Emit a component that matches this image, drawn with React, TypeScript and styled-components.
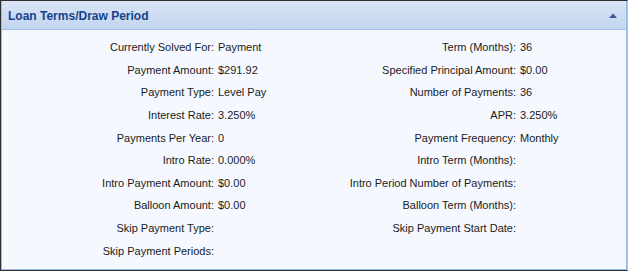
import styled, {createGlobalStyle} from "styled-components";

const GlobalStyle = createGlobalStyle`
    html, body {
        margin: 0;
        padding: 0;
        background: #ffffff;
    }
    body {
        font-family: "Liberation Sans", Arial, sans-serif;
    }
`

type FieldType = {
    label: string
    value?: string
}

const rows: [FieldType, FieldType][] = [
    [{label: "Currently Solved For:", value: "Payment"}, {label: "Term (Months):", value: "36"}],
    [{label: "Payment Amount:", value: "$291.92"}, {label: "Specified Principal Amount:", value: "$0.00"}],
    [{label: "Payment Type:", value: "Level Pay"}, {label: "Number of Payments:", value: "36"}],
    [{label: "Interest Rate:", value: "3.250%"}, {label: "APR:", value: "3.250%"}],
    [{label: "Payments Per Year:", value: "0"}, {label: "Payment Frequency:", value: "Monthly"}],
    [{label: "Intro Rate:", value: "0.000%"}, {label: "Intro Term (Months):"}],
    [{label: "Intro Payment Amount:", value: "$0.00"}, {label: "Intro Period Number of Payments:"}],
    [{label: "Balloon Amount:", value: "$0.00"}, {label: "Balloon Term (Months):"}],
    [{label: "Skip Payment Type:"}, {label: "Skip Payment Start Date:"}],
    [{label: "Skip Payment Periods:"}, {label: ""}],
]

export default function App() {
    return (
        <>
            <GlobalStyle/>
            <Frame>
                <Panel>
                    <Header>
                        <Title>Loan Terms/Draw Period</Title>
                        <CollapseBtn aria-label="collapse">
                            <svg width="8" height="5" viewBox="0 0 8 5">
                                <path d="M0 5 L4 0.5 L8 5 Z" fill="#3b5a96"/>
                            </svg>
                        </CollapseBtn>
                    </Header>
                    <Body>
                        {rows.map((pair, i) => (
                            pair.map((f, j) => [
                                <Label key={`l${i}-${j}`}>{f.label}</Label>,
                                <Value key={`v${i}-${j}`}>{f.value ?? ""}</Value>,
                            ])
                        ))}
                    </Body>
                </Panel>
            </Frame>
        </>
    );
}

const Frame = styled.div`
    width: 628px;
    height: 271px;
    box-sizing: border-box;
    border: 1px solid #2f2f2f;
    border-right-color: #bfbfbf;
    background: #ffffff;
    display: flex;
`

const Panel = styled.div`
    flex: 1;
    display: flex;
    flex-direction: column;
    border: 1px solid #99bbe8;
    border-top: none;
    background: #f5f9ff;
`

const Header = styled.div`
    height: 28px;
    display: flex;
    align-items: center;
    justify-content: space-between;
    padding: 0 9px 0 6px;
    background: linear-gradient(to bottom, #dae6f6 0%, #cddcf2 50%, #c3d5ef 100%);
    border-bottom: 1px solid #99bbe8;
`

const Title = styled.div`
    font-family: "Liberation Sans", Arial, sans-serif;
    font-weight: 700;
    font-size: 12px;
    color: #15428b;
    padding-top: 2px;
`

const CollapseBtn = styled.div`
    display: flex;
    align-items: center;
    padding-top: 1px;
`

const Body = styled.div`
    display: grid;
    grid-template-columns: 212px 82px 212px 1fr;
    column-gap: 4px;
    grid-auto-rows: 22.6px;
    padding-top: 6px;
    font-family: "Liberation Sans", Arial, sans-serif;
    font-size: 11px;
    color: #1a1a1a;
`

const Label = styled.div`
    white-space: nowrap;
    display: flex;
    align-items: center;
    justify-content: flex-end;
`

const Value = styled.div`
    white-space: nowrap;
    display: flex;
    align-items: center;
`
